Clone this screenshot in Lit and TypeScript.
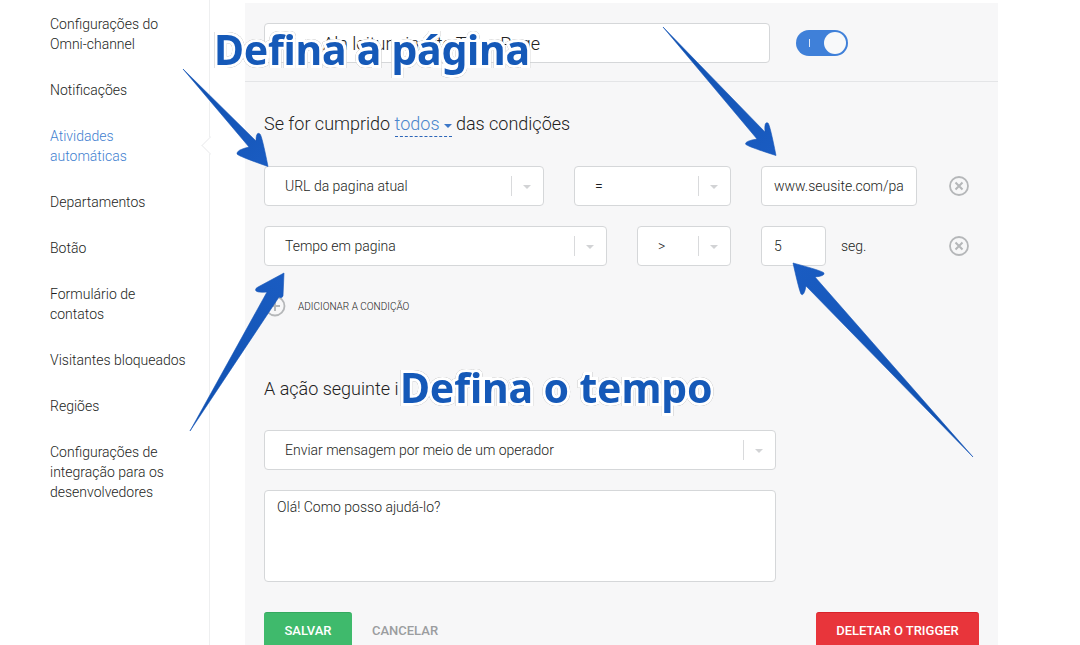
import { LitElement, html, css, svg } from "lit";
import { customElement } from "lit/decorators.js";

const NAV: { lines: string[]; active?: boolean }[] = [
  { lines: ["Configurações do", "Omni-channel"] },
  { lines: ["Notificações"] },
  { lines: ["Atividades", "automáticas"], active: true },
  { lines: ["Departamentos"] },
  { lines: ["Botão"] },
  { lines: ["Formulário de", "contatos"] },
  { lines: ["Visitantes bloqueados"] },
  { lines: ["Regiões"] },
  { lines: ["Configurações de", "integração para os", "desenvolvedores"] },
];

const ARROWS: { d: string; x1: number; y1: number; x2: number; y2: number }[] = [
  { d: "M183 69 L249 147 Q236 150 237 154 Q238 156 268 166.500 Q262 136 260 134 Q256 131 256 141 Z", x1: 183, y1: 69, x2: 268, y2: 166 },
  { d: "M663 27 L757 139 Q745 141 745.500 144 Q746 146 776 155.500 Q770 125 768 123 Q764 121 765 132 Z", x1: 663, y1: 27, x2: 776, y2: 155 },
  { d: "M190 431 L267 292 Q256 293 255.500 290 Q255.500 288 258 287 L284 273 L283 296 Q282 299 279 297 Z", x1: 190, y1: 431, x2: 284, y2: 273 },
  { d: "M973 457 L815 277 Q825 276 824 273 Q823 271 793 263 Q799 290 801 294 Q804 297 806 286 Z", x1: 973, y1: 457, x2: 793, y2: 263 },
];

const closeIcon = svg`<svg class="x" viewBox="0 0 20 20" width="20" height="20"><circle cx="10" cy="10" r="9" fill="none" stroke="#b5b7b9" stroke-width="1.800"/><path d="M6.500 6.500 L13.500 13.500 M13.500 6.500 L6.500 13.500" stroke="#b5b7b9" stroke-width="2" fill="none"/></svg>`;

@customElement("app-root")
export class AppRoot extends LitElement {
  static styles = css`
    :host { display: block; position: relative; width: 1080px; height: 645px; overflow: hidden; background: #fff; font-family: Roboto, "Liberation Sans", sans-serif; color: #222; }
    .app { display: flex; height: 645px; }
    .side { box-sizing: border-box; position: relative; width: 210px; flex: none; border-right: 1px solid #eeeff0; padding: 14px 0 0 50px; display: flex; flex-direction: column; gap: 26px; font-size: 14px; line-height: 20px; font-weight: 300; color: #1c1e22; }
    .nav.active { color: #3f7fd0; }
    .nav div { white-space: nowrap; }
    .notch { position: absolute; left: 204px; top: 139px; width: 12px; height: 12px; background: #fff; border-left: 1px solid #eeeff0; border-bottom: 1px solid #eeeff0; transform: rotate(45deg); }
    .panel { box-sizing: border-box; width: 753px; margin: 3px 0 0 35px; background: #f7f7f8; height: 642px; flex: none; }
    .head { box-sizing: border-box; height: 79px; padding: 20px 0 0 19px; display: flex; gap: 26px; border-bottom: 1px solid #e4e5e7; }
    .box { box-sizing: border-box; height: 40px; background: #fff; border: 1px solid #d5d7d9; border-radius: 4px; display: flex; align-items: center; flex: none; white-space: nowrap; overflow: hidden; }
    .title { width: 506px; padding-left: 58px; font-size: 18px; font-weight: 300; color: #222; }
    .toggle { box-sizing: border-box; margin-top: 7px; width: 52px; height: 26px; border-radius: 13px; background: #3f80d9; display: flex; align-items: center; justify-content: flex-end; padding-right: 2px; position: relative; }
    .knob { width: 22px; height: 22px; border-radius: 50%; background: #f8f9fa; }
    .tick { position: absolute; left: 13px; top: 9px; width: 1px; height: 8px; background: #dfe9f8; }
    .body { padding: 30px 29px 0 19px; }
    .cond { height: 24px; font-size: 18px; line-height: 24px; font-weight: 300; color: #222; display: flex; align-items: center; white-space: pre; }
    .todos { display: inline-flex; align-items: center; gap: 4px; height: 24px; border-bottom: 1px dashed #2d66b8; color: #4a85cc; }
    .todos i { width: 0; height: 0; border-left: 4px solid transparent; border-right: 4px solid transparent; border-top: 4px solid #3d78c8; margin-top: 4px; }
    .row { display: flex; align-items: center; gap: 30px; margin-top: 30px; }
    .row + .row { margin-top: 20px; }
    .sel { position: relative; padding-left: 20px; font-size: 14px; font-weight: 300; color: #1c1e22; }
    .sep { position: absolute; right: 31px; top: 9px; width: 1px; height: 20px; background: #d9dadc; }
    .car { position: absolute; right: 12px; top: 18px; width: 0; height: 0; border-left: 4px solid transparent; border-right: 4px solid transparent; border-top: 4px solid #d2d3d5; }
    .w280 { width: 280px; } .w157 { width: 157px; } .w343 { width: 343px; } .w94 { width: 94px; } .w512 { width: 512px; }
    .inp { padding-left: 12px; font-size: 14px; font-weight: 300; color: #1c1e22; }
    .w156 { width: 156px; } .w65 { width: 65px; }
    .seg { font-size: 14px; font-weight: 300; margin-left: -15px; color: #1c1e22; }
    .x { margin-left: auto; flex: none; display: block; }
    .add { display: flex; align-items: center; gap: 12px; margin-top: 30px; height: 20px; font-size: 10px; font-weight: 300; color: #222; }
    .plus { width: 22px; height: 22px; flex: none; display: block; }
    .act { margin-top: 61px; }
    .sel.mt { margin-top: 29px; }
    .msg { box-sizing: border-box; margin-top: 20px; width: 512px; height: 92px; background: #fff; border: 1px solid #d5d7d9; border-radius: 4px; padding: 6px 12px; font-size: 14px; font-weight: 300; line-height: 20px; color: #1c1e22; }
    .btns { display: flex; align-items: flex-start; margin-top: 30px; }
    .btn { box-sizing: border-box; height: 36px; border-radius: 3px; display: flex; align-items: center; justify-content: center; font-size: 13px; font-weight: 500; color: #fff; }
    .save { width: 88px; background: #3fba6c; border-top: 1px solid #34a95f; }
    .cancel { color: #9b9d9f; margin-left: 20px; width: 66px; }
    .del { width: 163px; margin-left: auto; margin-right: -10px; background: #e8353b; border-top: 1px solid #d8222a; }
    .arrows { position: absolute; left: 0; top: 0; pointer-events: none; }
    .note { position: absolute; font-family: "Noto Sans", "Open Sans", sans-serif; font-weight: 700; font-size: 41px; line-height: 50px; color: #1559b8; letter-spacing: -0.15px; white-space: nowrap; -webkit-text-stroke: 6px #fff; paint-order: stroke fill; filter: drop-shadow(0 0 0.7px #8a8a8a); }
    .n1 { left: 214px; top: 24px; letter-spacing: -0.25px; }
    .n2 { left: 400px; top: 362px; }
  `;

  private select(label: string, cls: string) {
    return html`<div class="box sel ${cls}">${label}<span class="sep"></span><span class="car"></span></div>`;
  }

  render() {
    return html`
      <div class="app">
        <nav class="side">
          ${NAV.map((n) => html`<div class="nav ${n.active ? "active" : ""}">${n.lines.map((l) => html`<div>${l}</div>`)}</div>`)}
          <span class="notch"></span>
        </nav>
        <main class="panel">
          <div class="head">
            <div class="box title">Ala leitura in site Time Page</div>
            <div class="toggle"><span class="tick"></span><span class="knob"></span></div>
          </div>
          <div class="body">
            <div class="cond">Se for cumprido <span class="todos">todos<i></i></span> das condições</div>
            <div class="row">
              ${this.select("URL da pagina atual", "w280")}
              ${this.select("=", "w157")}
              <div class="box inp w156">www.seusite.com/pa</div>
              ${closeIcon}
            </div>
            <div class="row">
              ${this.select("Tempo em pagina", "w343")}
              ${this.select(">", "w94")}
              <div class="box inp w65">5</div>
              <span class="seg">seg.</span>
              ${closeIcon}
            </div>
            <div class="add">
              <svg class="plus" viewBox="0 0 22 22"><circle cx="11" cy="11" r="9.500" fill="none" stroke="#b5b7b9" stroke-width="1.800"/><path d="M11 6 V16 M6 11 H16" stroke="#b5b7b9" stroke-width="2"/></svg>
              ADICIONAR A CONDIÇÃO
            </div>
            <div class="cond act">A ação seguinte i</div>
            ${this.select("Enviar mensagem por meio de um operador", "w512 mt")}
            <div class="msg">Olá! Como posso ajudá-lo?</div>
            <div class="btns">
              <div class="btn save">SALVAR</div>
              <div class="btn cancel">CANCELAR</div>
              <div class="btn del">DELETAR O TRIGGER</div>
            </div>
          </div>
        </main>
      </div>
      <svg class="arrows" width="1080" height="645" viewBox="0 0 1080 645">
        <defs>
          ${ARROWS.map((a, i) => svg`<linearGradient id="ag${i}" gradientUnits="userSpaceOnUse" x1=${a.x1} y1=${a.y1} x2=${a.x2} y2=${a.y2}><stop offset="0" stop-color="#0f50ae"/><stop offset="1" stop-color="#1a5cc2"/></linearGradient>`)}
        </defs>
        ${ARROWS.map((a, i) => svg`<path d=${a.d} fill="url(#ag${i})" stroke="#1556b9" stroke-width="0.600" stroke-linejoin="round"/>`)}
      </svg>
      <div class="note n1">Defina a página</div>
      <div class="note n2">Defina o tempo</div>
    `;
  }
}
